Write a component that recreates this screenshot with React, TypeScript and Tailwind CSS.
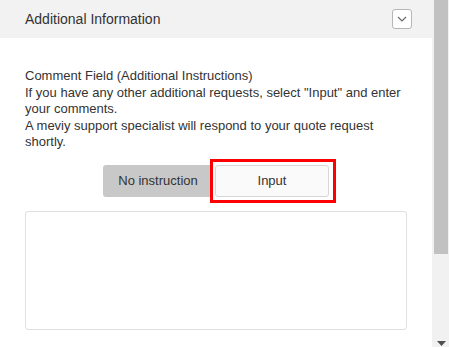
import { useState } from 'react'

// Accordion panel: "Additional Information" with comment field toggle

function ChevronButton() {
  return (
    <button
      type="button"
      className="w-[20px] h-[20px] flex items-center justify-center rounded-[3px] border border-[#b5b5b5] bg-white"
    >
      <svg width="10" height="6" viewBox="0 0 10 6" fill="none">
        <path d="M1 1l4 4 4-4" stroke="#666" strokeWidth="1.1" />
      </svg>
    </button>
  )
}

function Scrollbar() {
  return (
    <div className="w-[17px] h-full bg-[#f1f1f1] flex flex-col items-center">
      <div className="w-[14px] h-[254px] bg-[#c1c1c1] ml-[1px]" />
      <div className="flex-1" />
      <svg width="9" height="5" viewBox="0 0 9 5" className="mb-[1px] ml-[1px]">
        <path d="M0 0h9L4.5 5z" fill="#505050" />
      </svg>
    </div>
  )
}

export default function App() {
  const [mode, setMode] = useState<'none' | 'input'>('input')

  return (
    <div className="w-[449px] h-[347px] flex overflow-hidden bg-white font-['Liberation_Sans',Arial,sans-serif] text-[#333]">
      <div className="flex-1 flex flex-col">
        <div className="h-[38px] bg-[#f2f2f2] flex items-center justify-between pl-[25px] pr-[20px] shrink-0">
          <span className="text-[14px] leading-none">Additional Information</span>
          <ChevronButton />
        </div>

        <div className="px-[25px] pt-[30px]">
          <p className="text-[13px] leading-[16.5px]">
            Comment Field (Additional Instructions)
            <br />
            If you have any other additional requests, select "Input" and enter your comments.
            <br />
            A meviy support specialist will respond to your quote request shortly.
          </p>

          <div className="flex justify-center gap-[2px] mt-[14px]">
            <button
              type="button"
              onClick={() => setMode('none')}
              className="w-[110px] h-[32px] rounded-[3px] bg-[#c8c8c8] text-[13px] text-[#333]"
            >
              No instruction
            </button>
            <div className="relative">
              <button
                type="button"
                onClick={() => setMode('input')}
                className="w-[114px] h-[32px] rounded-[3px] border border-[#d7d7d7] bg-[#fafafa] text-[13px] text-[#333]"
              >
                Input
              </button>
              {mode === 'input' && (
                <div className="absolute -left-[5px] -top-[6px] w-[126px] h-[44px] border-[3px] border-[#ff0000] pointer-events-none" />
              )}
            </div>
          </div>

          <textarea className="mt-[14px] block w-full h-[119px] rounded-[3px] border border-[#e0e0e0] resize-none outline-none" />
        </div>
      </div>
      <Scrollbar />
    </div>
  )
}
